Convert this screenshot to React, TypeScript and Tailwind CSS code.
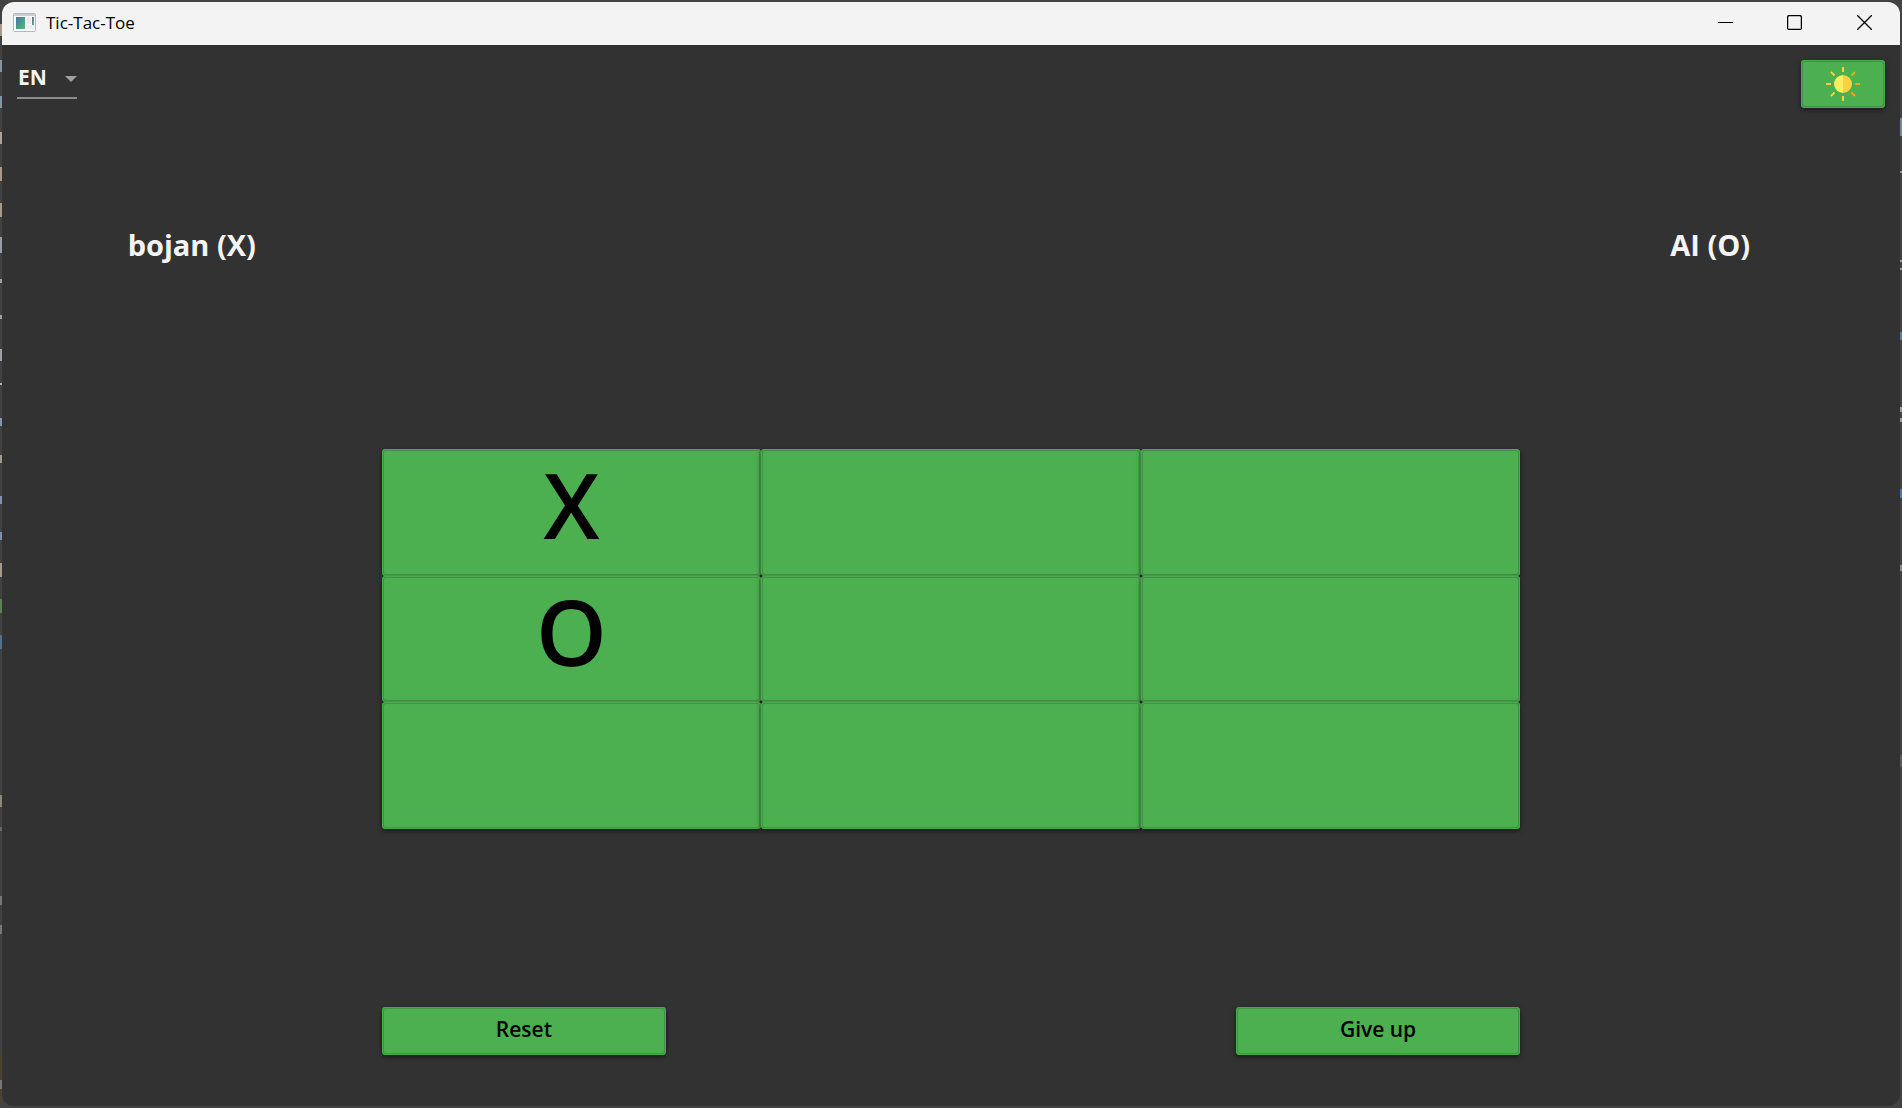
import { useState } from "react";

const GREEN_BUTTON =
  "rounded bg-[#4caf50] text-black font-semibold shadow-[inset_0_0_0_1px_#4aa84e,inset_0_0_0_2px_#43924a,0_2px_5px_rgba(0,0,0,0.5)]";

// Fragments of the editor that peek out beside the window: [y, height, colour]
const LEFT_FRAGMENTS: [number, number, string][] = [
  [24, 12, "#a59a8c"], [60, 12, "#8795a3"], [96, 12, "#8795a3"], [132, 12, "#a8a49c"],
  [167, 14, "#a59a8c"], [203, 14, "#a59a8c"], [237, 16, "#9a9da3"], [279, 4, "#a0a0a0"],
  [315, 4, "#a0a0a0"], [349, 12, "#9da2a6"], [383, 2, "#b0b0b0"], [418, 8, "#8796a6"],
  [455, 8, "#a09a90"], [496, 8, "#7f93ad"], [532, 8, "#7f93ad"], [563, 14, "#a59a8c"],
  [599, 14, "#5b8150"], [635, 14, "#52718c"], [795, 12, "#8f867c"], [827, 4, "#666666"],
  [896, 9, "#777777"], [925, 9, "#777777"], [1052, 50, "#4a4232"], [1080, 9, "#777777"],
];
const RIGHT_FRAGMENTS: [number, number, string][] = [
  [118, 18, "#71889c"], [171, 2, "#8a94a0"], [260, 2, "#a0a0a0"], [268, 2, "#a0a0a0"],
  [332, 8, "#5f7fa3"], [407, 5, "#a0a0a0"], [418, 4, "#a0a0a0"], [489, 9, "#4b75b5"],
  [565, 6, "#8c8c8c"], [755, 12, "#5a5a5a"],
];

function Fragments({ items }: { items: [number, number, string][] }) {
  return (
    <svg className="h-full w-full" aria-hidden="true">
      {items.map(([y, height, fill]) => (
        <rect key={y} y={y} width="2" height={height} fill={fill} />
      ))}
    </svg>
  );
}

function AppIcon() {
  return (
    <svg width="23" height="19" viewBox="0 0 23 19" aria-hidden="true">
      <defs>
        <linearGradient id="pane" x1="0" y1="0" x2="1" y2="1">
          <stop offset="0" stopColor="#3f77a8" />
          <stop offset="1" stopColor="#5bb974" />
        </linearGradient>
      </defs>
      <rect x="0.5" y="0.5" width="22" height="18" rx="1" fill="#f8f9fa" stroke="#b3b8bd" />
      <path d="M1 2H22" stroke="#c9ced3" strokeWidth="2" />
      <rect x="3" y="4" width="9" height="12" fill="url(#pane)" />
      <rect x="14" y="4" width="4" height="7" fill="#e9ebec" />
      <rect x="19" y="4" width="2" height="8" fill="url(#pane)" />
      <rect x="14" y="12" width="7" height="4" fill="#eceeef" />
    </svg>
  );
}

function SunIcon() {
  return (
    <svg width="34" height="34" viewBox="0 0 34 34" aria-hidden="true">
      <g stroke="#fdd23c" strokeWidth="2">
        <path d="M17 0V5M17 29V34M0 17H5M5 5L8.5 8.5M5 29L8.5 25.5" />
        <path d="M29 17H34M29 5L25.5 8.5M29 29L25.5 25.5" stroke="#f9a60d" />
      </g>
      <path d="M17 8A9 9 0 0 0 17 26Z" fill="#ffee63" />
      <path d="M17 8A9 9 0 0 1 17 26Z" fill="#ffd140" />
    </svg>
  );
}

function TitleBar() {
  return (
    <header className="flex h-[43px] shrink-0 items-center justify-between bg-[#f3f3f3] pb-[2px] pl-[11px] text-black">
      <div className="flex items-center gap-[10px]">
        <AppIcon />
        <h1 className="text-[17px] leading-6">Tic-Tac-Toe</h1>
      </div>
      <div className="flex h-full">
        <button aria-label="Minimize" className="flex w-[69px] items-center justify-center">
          <svg width="15" height="15" viewBox="0 0 15 15" fill="none" stroke="black"><path d="M0 7.5H15" /></svg>
        </button>
        <button aria-label="Maximize" className="flex w-[69px] items-center justify-center">
          <svg width="15" height="15" viewBox="0 0 15 15" fill="none" stroke="black"><rect x="0.6" y="0.6" width="13.8" height="13.8" rx="1.5" strokeWidth="1.3" /></svg>
        </button>
        <button aria-label="Close" className="flex w-[71px] items-center justify-center">
          <svg width="15" height="15" viewBox="0 0 15 15" fill="none" stroke="black" strokeWidth="1.3"><path d="M0 0L15 15M15 0L0 15" /></svg>
        </button>
      </div>
    </header>
  );
}

export default function App() {
  const [cells, setCells] = useState(["X", "", "", "O", "", "", "", "", ""]);
  const [language, setLanguage] = useState("EN");

  const play = (index: number) =>
    setCells((prev) => prev.map((mark, i) => (i === index && !mark ? "X" : mark)));

  return (
    <div className="relative flex min-h-screen flex-col bg-[#434242] p-[2px] font-['Open_Sans',sans-serif]">
      <div className="absolute inset-y-0 left-0 w-[2px]"><Fragments items={LEFT_FRAGMENTS} /></div>
      <div className="absolute inset-y-0 right-0 w-[2px]"><Fragments items={RIGHT_FRAGMENTS} /></div>
      <div className="flex grow flex-col overflow-hidden rounded-xl bg-[#323232]">
        <TitleBar />
        <main className="flex grow flex-col pb-[51px]">
          <div className="flex items-start justify-between px-[15px] pt-[15px]">
            <div className="relative flex h-[39px] w-[60px] items-center border-b-2 border-[#8c8c8c]">
              <select
                aria-label="Language"
                value={language}
                onChange={(e) => setLanguage(e.target.value)}
                className="h-9 w-full appearance-none bg-transparent pb-1 pl-px text-[21px] leading-8 font-bold text-[#f4f4f4] outline-none"
              >
                <option>EN</option>
                <option>SR</option>
              </select>
              <svg className="pointer-events-none absolute right-0" width="12" height="6" viewBox="0 0 12 6" aria-hidden="true">
                <path d="M0 0H12L6 6Z" fill="#a0a0a0" />
              </svg>
            </div>
            <button aria-label="Light theme" className={`flex h-12 w-[84px] items-center justify-center ${GREEN_BUTTON}`}>
              <SunIcon />
            </button>
          </div>
          <div className="flex grow flex-col justify-between pt-[117px]">
            <div className="flex justify-between pb-[6px] text-center text-[29px] leading-10 font-bold text-[#f4f4f4]">
              <h2 className="w-1/5">bojan (X)</h2>
              <h2 className="w-1/5">AI (O)</h2>
            </div>
            <div className="mx-auto grid h-[380px] w-3/5 grid-cols-3 grid-rows-3">
              {cells.map((mark, i) => (
                <button
                  key={i}
                  aria-label={mark || `Empty cell ${i + 1}`}
                  onClick={() => play(i)}
                  className={`flex items-center justify-center pb-4 text-[90px] leading-none ${GREEN_BUTTON}`}
                >
                  {mark}
                </button>
              ))}
            </div>
            <div className="mx-auto flex w-3/5 justify-between text-[21px] leading-8">
              <button className={`h-12 w-1/4 pb-1 ${GREEN_BUTTON}`}>Reset</button>
              <button className={`h-12 w-1/4 pb-1 ${GREEN_BUTTON}`}>Give up</button>
            </div>
          </div>
        </main>
      </div>
    </div>
  );
}
